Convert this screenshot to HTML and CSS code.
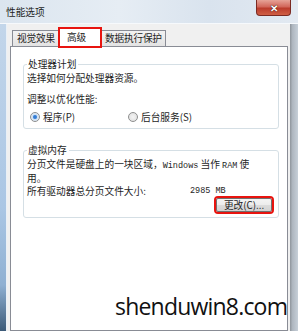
FILE: index.html
```html
<!DOCTYPE html>
<html lang="zh-CN">
<head>
    <meta charset="UTF-8">
    <title>性能选项</title>
    <link rel="stylesheet" href="styles.css">
</head>
<body>
    <div class="window">
        <div class="titlebar">
            <span class="title">性能选项</span>
            <span class="close">&#x2715;</span>
        </div>

        <div class="frame">
            <div class="edge-left"></div>
            <div class="dialog">
                <div class="tabs">
                    <div class="tab">视觉效果</div>
                    <div class="tab active">高级</div>
                    <div class="tab">数据执行保护</div>
                </div>

                <div class="panel">
                    <div class="group">
                        <div class="group-title">处理器计划</div>
                        <div class="line first">选择如何分配处理器资源。</div>
                        <div class="line spaced">调整以优化性能:</div>
                        <div class="radios">
                            <label class="radio"><span class="dot checked"></span>程序(P)</label>
                            <label class="radio"><span class="dot"></span>后台服务(S)</label>
                        </div>
                    </div>

                    <div class="group second">
                        <div class="group-title">虚拟内存</div>
                        <div class="line first">分页文件是硬盘上的一块区域，<span class="mono">Windows</span> 当作 <span class="mono">RAM</span> 使</div>
                        <div class="line">用。</div>
                        <div class="line size-row">
                            <span class="size-label">所有驱动器总分页文件大小:</span>
                            <span class="mono">2985 MB</span>
                        </div>
                        <div class="btn-row">
                            <button class="btn">更改(C)...</button>
                        </div>
                    </div>
                </div>
            </div>
            <div class="edge-right"></div>
        </div>
    </div>

    <div class="watermark">shenduwin8.com</div>
</body>
</html>
```

FILE: styles.css
```css
body {
    margin: 0;
    width: 298px;
    height: 331px;
    overflow: hidden;
    position: relative;
    font-family: "Noto Sans CJK SC", sans-serif;
    font-size: 9.7px;
    color: #1e1e1e;
    background-color: #dfe7f0;
}
.window {
    display: flex;
    flex-direction: column;
    height: 331px;
}
.titlebar {
    height: 23px;
    display: flex;
    align-items: flex-start;
    justify-content: space-between;
    background: linear-gradient(90deg, #dbe5ef 0%, #e6edf4 40%, #d9e3ee 70%, #e2e9f1 100%);
}
.title {
    margin: 6px 0 0 6px;
    line-height: 12px;
    font-size: 9.7px;
}
.close {
    width: 33px;
    height: 15px;
    margin-right: 7px;
    border: 1px solid #7b2a22;
    border-top: none;
    border-radius: 0 0 4px 4px;
    background: linear-gradient(#e6a397 0%, #d2675a 45%, #bb3c2c 55%, #cf5f45 100%);
    color: #fff;
    font-size: 10px;
    font-weight: bold;
    line-height: 15px;
    text-align: center;
    text-shadow: 0 0 1px #3a0f0a, 0 0 1px #3a0f0a;
}
.frame {
    flex: 1;
    display: flex;
    border-top: 1px solid #f6f9fc;
}
.edge-left {
    width: 6px;
    background: linear-gradient(#c3d6ea 0%, #aac6e4 60%, #8fb0d2 85%, #3c5a78 100%);
    border-right: 1px solid #e9f0f7;
}
.edge-right {
    width: 8px;
    background: linear-gradient(90deg, #8e949b 0%, #aeb6bf 30%, #c6cfd8 100%);
}
.dialog {
    flex: 1;
    background-color: #f0f0f0;
    padding: 3px 2px 0 3px;
    display: flex;
    flex-direction: column;
}
.tabs {
    display: flex;
    align-items: flex-end;
    padding-left: 2px;
    height: 19px;
}
.tab {
    height: 15px;
    line-height: 15px;
    padding: 0 3px 0 4px;
    border: 1px solid #898c95;
    border-bottom: none;
    border-left: none;
    background: linear-gradient(#f2f2f2, #e3e3e3);
    letter-spacing: -0.2px;
}
.tab:first-child {
    border-left: 1px solid #898c95;
}
.tab.active {
    height: 18px;
    line-height: 17px;
    padding: 0 14px 0 8px;
    margin-bottom: -1px;
    background: #fff;
    outline: 2px solid #e8140f;
    outline-offset: -1px;
    position: relative;
    z-index: 1;
}
.panel {
    flex: 1;
    background-color: #fff;
    border: 1px solid #898c95;
    padding: 17px 8px 0 12px;
}
.group {
    border: 1px solid #d5dfe5;
    border-radius: 3px;
    padding: 0 4px 5px 3px;
}
.group.second {
    margin-top: 21px;
    padding-bottom: 5px;
}
.group-title {
    width: max-content;
    margin-top: -7px;
    padding: 0 2px 0 1px;
    background-color: #fff;
    line-height: 12px;
}
.line {
    line-height: 12px;
}
.line.first {
    margin-top: 2px;
}
.line.spaced {
    margin-top: 9px;
}
.radios {
    display: flex;
    margin-top: 6px;
    padding-left: 3px;
    line-height: 12px;
}
.radio {
    display: flex;
    align-items: center;
    width: 98px;
}
.dot {
    width: 8px;
    height: 8px;
    border: 1px solid #8e8f8f;
    border-radius: 50%;
    margin-right: 3px;
    background: radial-gradient(circle, #f4f4f4 0%, #dcdcdc 100%);
}
.dot.checked {
    background: radial-gradient(circle, #2a6fc8 0%, #4a8fe0 32%, #cfe0f2 42%, #f0f5fa 100%);
}
.mono {
    font-family: "Liberation Mono", monospace;
    font-size: 8.5px;
}
.size-row {
    display: flex;
    margin-top: 1px;
}
.size-label {
    width: 163px;
}
.btn-row {
    display: flex;
    justify-content: flex-end;
    margin-top: 1px;
    padding-right: 2px;
}
.btn {
    font-family: "Noto Sans CJK SC", sans-serif;
    font-size: 9.7px;
    color: #1e1e1e;
    height: 14px;
    width: 56px;
    padding: 0;
    line-height: 12px;
    background: linear-gradient(#f4f4f4 0%, #ececec 50%, #dcdcdc 51%, #d2d2d2 100%);
    border: 1px solid #707070;
    border-radius: 2px;
    outline: 2px solid #e8140f;
    outline-offset: 0;
}
.watermark {
    position: absolute;
    left: 115px;
    top: 290px;
    font-family: "Open Sans", sans-serif;
    font-size: 23px;
    color: #111;
    letter-spacing: -0.8px;
}
```
